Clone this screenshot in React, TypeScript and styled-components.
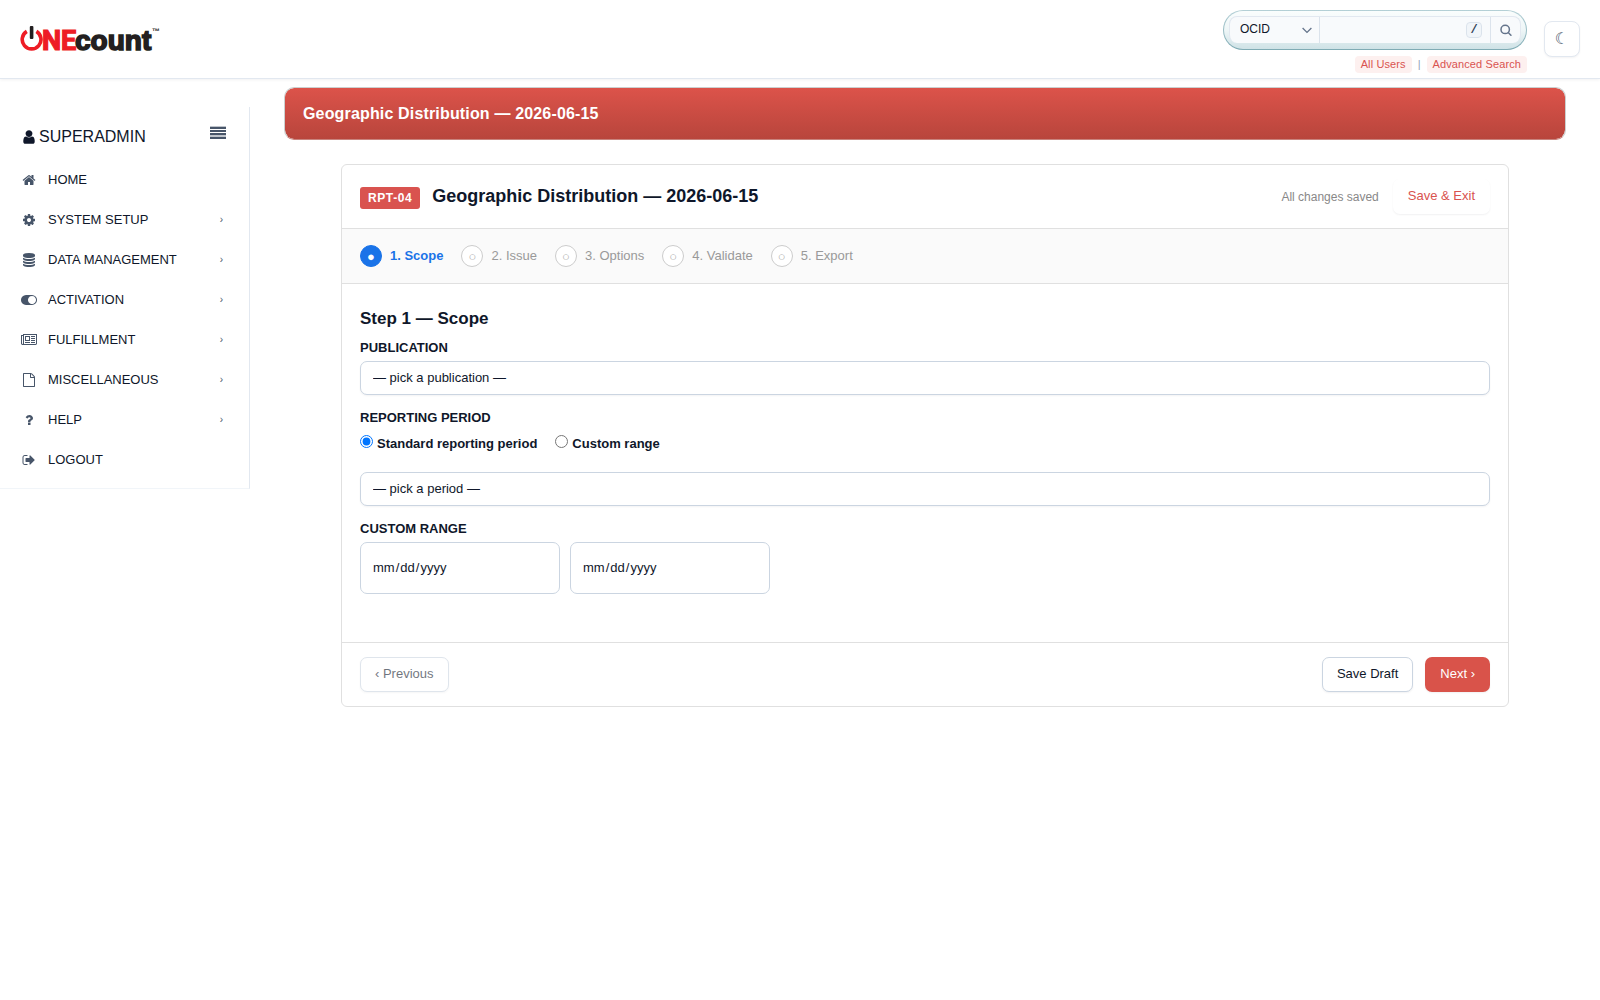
import React from "react";
import styled, { createGlobalStyle, css } from "styled-components";

const font = `"Liberation Sans", Arial, sans-serif`;

const GlobalStyle = createGlobalStyle`
  *, *::before, *::after { box-sizing: border-box; }
  body {
    margin: 0;
    background: #fff;
    color: #0f172a;
    font: 13px/16px ${font};
  }
  button, input, select { font: inherit; color: inherit; margin: 0; }
  h1, h2, h3, ul, fieldset { margin: 0; padding: 0; border: 0; }
`;

/* ---------- header ---------- */

const Header = styled.header`
  display: flex;
  align-items: center;
  justify-content: space-between;
  padding: 0 20px;
  border-bottom: 1px solid #e2e8f0;
  box-shadow: 0 1px 3px rgba(15, 23, 42, 0.06);
`;

const LogoLink = styled.a`
  display: block;
  line-height: 0;
`;

const HeaderTools = styled.div`
  display: flex;
  align-items: center;
  gap: 17px;
`;

const SearchColumn = styled.div`
  display: flex;
  flex-direction: column;
  align-items: flex-end;
  gap: 6px;
  padding: 10px 0 5px;
`;

const SearchPill = styled.form`
  display: flex;
  width: 304px;
  height: 40px;
  padding: 5px 5px 6px;
  border: 1px solid transparent;
  border-radius: 20px;
  background:
    linear-gradient(#fafdfd, #eef6f7 50%, #cfe2e6) padding-box,
    linear-gradient(#b4d0d6, #7fabb4) border-box;
`;

const SearchGroup = styled.div`
  display: flex;
  flex: 1;
  min-width: 0;
  border: 1px solid #e2e8f0;
  border-bottom: 0;
  border-radius: 8px;
  background: #f8fafc;
  overflow: hidden;
`;

const SearchTypeWrap = styled.div`
  position: relative;
  flex: 0 0 90px;
  border-right: 1px solid #dbe3ec;

  svg {
    position: absolute;
    right: 7px;
    top: 8px;
    pointer-events: none;
  }
`;

const SearchType = styled.select`
  appearance: none;
  width: 100%;
  height: 100%;
  padding: 0 20px 2px 10px;
  border: 0;
  background: transparent;
  font-size: 12px;
`;

const SearchInputWrap = styled.div`
  display: flex;
  flex: 1;
  min-width: 0;
  align-items: center;
  padding-right: 8px;
`;

const SearchInput = styled.input`
  flex: 1;
  min-width: 0;
  height: 100%;
  border: 0;
  padding: 0 8px;
  background: transparent;
`;

const Shortcut = styled.kbd`
  flex: 0 0 16px;
  height: 16px;
  border: 1px solid #dbe3ec;
  border-radius: 4px;
  background: #f1f5f9;
  color: #334155;
  font: 700 12px/14px "Liberation Mono", monospace;
  text-align: center;
`;

const SearchButton = styled.button`
  display: flex;
  flex: 0 0 30px;
  align-items: center;
  justify-content: center;
  padding: 0;
  border: 0;
  border-left: 1px solid #dbe3ec;
  background: transparent;
  color: #64748b;
`;

const QuickLinks = styled.nav`
  display: flex;
  align-items: center;
  gap: 6px;
  color: #94a3b8;
  font-size: 11px;
  line-height: 17px;
`;

const QuickLink = styled.a`
  padding: 0 6px;
  border-radius: 4px;
  background: #fdf0ef;
  color: #d9534f;
  letter-spacing: 0.01em;
  text-decoration: none;
`;

const ThemeButton = styled.button`
  width: 36px;
  height: 36px;
  padding: 0;
  border: 1px solid #e2e8f0;
  border-radius: 8px;
  background: #fff;
  box-shadow: 0 1px 2px rgba(15, 23, 42, 0.05);
  color: #475569;
  font: 16px/20px "DejaVu Sans", sans-serif;
`;

/* ---------- page ---------- */

const Page = styled.div`
  display: flex;
  align-items: flex-start;
`;

const Sidebar = styled.aside`
  flex: 0 0 250px;
  margin-top: 28px;
  padding: 15px 0 8px;
  border-right: 1px solid #e2e8f0;
  border-bottom: 1px solid #f1f5f9;
`;

const UserRow = styled.div`
  display: flex;
  align-items: flex-start;
  justify-content: space-between;
  height: 38px;
  padding: 4px 23px 0 21px;
`;

const UserName = styled.div`
  display: flex;
  align-items: center;
  gap: 2px;
  font-size: 16px;
  line-height: 22px;
`;

const MenuButton = styled.button`
  padding: 0;
  border: 0;
  background: transparent;
  color: #475569;
  line-height: 0;
`;

const NavList = styled.ul`
  list-style: none;
`;

const NavLink = styled.a`
  display: flex;
  align-items: center;
  height: 40px;
  padding: 0 26px 0 20px;
  color: #0f172a;
  text-decoration: none;
`;

const NavIcon = styled.span`
  display: flex;
  justify-content: center;
  width: 18px;
  margin-right: 10px;
  color: #475569;
`;

const NavText = styled.span`
  flex: 1;
`;

const NavArrow = styled.span`
  color: #475569;
  font-size: 10px;
`;

const Main = styled.main`
  flex: 1;
  min-width: 0;
  padding: 8px 34px 40px;
`;

const Banner = styled.h1`
  padding: 16px 18px;
  border: 1px solid #ccd0d0;
  border-radius: 10px;
  border-bottom-color: #c9837d;
  background: linear-gradient(#dc534a, #b8453c) padding-box;
  color: #fff;
  font-size: 16px;
  line-height: 19px;
  letter-spacing: 0.01em;
`;

const Card = styled.section`
  margin: 24px 57px 0;
  border: 1px solid #e0e0e0;
  border-radius: 6px;
  overflow: hidden;
`;

const CardHeader = styled.div`
  display: flex;
  align-items: center;
  justify-content: space-between;
  padding: 14px 18px;
  border-bottom: 1px solid #e0e0e0;
`;

const TitleGroup = styled.div`
  display: flex;
  align-items: baseline;
  gap: 12px;
`;

const Badge = styled.span`
  padding: 0 8px;
  border-radius: 3px;
  background: #d9534f;
  color: #fff;
  font-size: 12px;
  font-weight: 700;
  line-height: 22px;
  letter-spacing: 0.05em;
`;

const Title = styled.h2`
  font-size: 18px;
  line-height: 22px;
`;

const SaveGroup = styled.div`
  display: flex;
  align-items: center;
  gap: 14px;
`;

const SaveStatus = styled.span`
  color: #888;
  font-size: 12px;
`;

type Variant = "plain" | "outline" | "primary";

const Button = styled.button<{ $variant: Variant }>`
  height: 35px;
  padding: 0 14px 2px;
  border: 1px solid transparent;
  border-radius: 7px;
  background: #fff;
  box-shadow: 0 1px 2px rgba(15, 23, 42, 0.06);

  ${(p) => p.$variant === "plain" && css`color: #d9534f;`}
  ${(p) => p.$variant === "outline" && css`border-color: #cbd5e1;`}
  ${(p) => p.$variant === "primary" && css`background: #d9534a; color: #fff;`}

  &:disabled { opacity: 0.6; }
`;

const Stepper = styled.ol`
  display: flex;
  gap: 18px;
  margin: 0;
  padding: 16px 18px;
  border-bottom: 1px solid #e0e0e0;
  background: #fafafa;
  list-style: none;
`;

const Step = styled.li<{ $active: boolean }>`
  display: flex;
  align-items: center;
  gap: 8px;
  color: ${(p) => (p.$active ? "#1a73e8" : "#999")};
  font-weight: ${(p) => (p.$active ? 700 : 400)};
`;

const StepDot = styled.span<{ $active: boolean }>`
  width: 22px;
  height: 22px;
  border: 1px solid ${(p) => (p.$active ? "#1a73e8" : "#ccc")};
  border-radius: 50%;
  background: ${(p) => (p.$active ? "#1a73e8" : "#fff")};
  color: ${(p) => (p.$active ? "#fff" : "#aaa")};
  font-size: 13px;
  line-height: 21px;
  text-align: center;
`;

const CardBody = styled.div`
  display: flex;
  flex-direction: column;
  gap: 15px;
  padding: 24px 18px 48px;
`;

const StepTitle = styled.h3`
  margin-bottom: -5px;
  font-size: 17px;
  line-height: 22px;
`;

const Field = styled.div`
  display: flex;
  flex-direction: column;
  gap: 5px;
`;

const fieldLabel = css`
  display: block;
  padding: 0;
  font-weight: 700;
  line-height: 16px;
  text-transform: uppercase;
`;

const Label = styled.label`
  ${fieldLabel}
`;

const Legend = styled.legend`
  ${fieldLabel}
`;

const control = css`
  border: 1px solid #cbd5e1;
  border-radius: 7px;
  background: #fff;
  box-shadow: 0 1px 2px rgba(15, 23, 42, 0.05);
`;

const Select = styled.select`
  ${control}
  appearance: none;
  width: 100%;
  height: 34px;
  padding: 0 12px 1px;
`;

const RadioRow = styled.div`
  display: flex;
  gap: 18px;
  margin: 9px 0 19px;
`;

const RadioLabel = styled.label`
  display: flex;
  align-items: flex-start;
  gap: 4px;
  font-weight: 700;
  line-height: 18px;

  input {
    width: 13px;
    height: 13px;
  }
`;

const DateRow = styled.div`
  display: flex;
  gap: 10px;
  padding-top: 5px;
`;

const DateInput = styled.input`
  ${control}
  width: 200px;
  height: 52px;
  padding: 0 11px;
  box-shadow: none;

  &::-webkit-calendar-picker-indicator { display: none; }
  &::-webkit-datetime-edit-fields-wrapper { padding: 0; }
`;

const CardFooter = styled.div`
  display: flex;
  align-items: center;
  gap: 12px;
  padding: 14px 18px;
  border-top: 1px solid #e0e0e0;
`;

const Spacer = styled.span`
  flex: 1;
`;

/* ---------- icons ---------- */

const Glyph = ({ d, wide = false, size = 14 }: { d: string; wide?: boolean; size?: number }) => (
  <svg
    width={wide ? (size * 8) / 7 : size}
    height={size}
    viewBox={`0 0 ${wide ? 2048 : 1792} 1792`}
    fill="currentColor"
    aria-hidden="true"
  >
    <path d={d} />
  </svg>
);

const icons = {
  user: "M1536 1399q0 109-62.5 187t-150.5 78h-854q-88 0-150.5-78t-62.5-187q0-85 8.5-160.5t31.5-152 58.5-131 94-89 134.5-34.5q131 128 313 128t313-128q76 0 134.5 34.5t94 89 58.5 131 31.5 152 8.5 160.5zm-256-887q0 159-112.5 271.5t-271.5 112.5-271.5-112.5-112.5-271.5 112.5-271.5 271.5-112.5 271.5 112.5 112.5 271.5z",
  home: "M1472 992v480q0 26-19 45t-45 19h-384v-384h-256v384h-384q-26 0-45-19t-19-45v-480q0-1 .5-3t.5-3l575-474 575 474q1 2 1 6zm223-69l-62 74q-8 9-21 11h-3q-13 0-21-7l-692-577-692 577q-12 8-24 7-13-2-21-11l-62-74q-8-10-7-23.5t11-21.5l719-599q32-26 76-26t76 26l244 204v-195q0-14 9-23t23-9h192q14 0 23 9t9 23v408l219 182q10 8 11 21.5t-7 23.5z",
  cog: "M1152 896q0-106-75-181t-181-75-181 75-75 181 75 181 181 75 181-75 75-181zm512-109v222q0 12-8 23t-20 13l-185 28q-19 54-39 91 35 50 107 138 10 12 10 25t-9 23q-27 37-99 108t-94 71q-12 0-26-9l-138-108q-44 23-91 38-16 136-29 186-7 28-36 28h-222q-14 0-24.5-8.5t-11.5-21.5l-28-184q-49-16-90-37l-141 107q-10 9-25 9-14 0-25-11-126-114-165-168-7-10-7-23 0-12 8-23 15-21 51-66.5t54-70.5q-27-50-41-99l-183-27q-13-2-21-12.5t-8-23.5v-222q0-12 8-23t19-13l186-28q14-46 39-92-40-57-107-138-10-12-10-24 0-10 9-23 26-36 98.5-107.5t94.5-71.5q13 0 26 10l138 107q44-23 91-38 16-136 29-186 7-28 36-28h222q14 0 24.5 8.5t11.5 21.5l28 184q49 16 90 37l142-107q9-9 24-9 13 0 25 10 129 119 165 170 7 8 7 22 0 12-8 23-15 21-51 66.5t-54 70.5q26 50 41 98l183 28q13 2 21 12.5t8 23.5z",
  database: "M896 768q237 0 443-43t325-127v170q0 69-103 128t-280 93.5-385 34.5-385-34.5-280-93.5-103-128v-170q119 84 325 127t443 43zm0 768q237 0 443-43t325-127v170q0 69-103 128t-280 93.5-385 34.5-385-34.5-280-93.5-103-128v-170q119 84 325 127t443 43zm0-384q237 0 443-43t325-127v170q0 69-103 128t-280 93.5-385 34.5-385-34.5-280-93.5-103-128v-170q119 84 325 127t443 43zm0-1152q208 0 385 34.5t280 93.5 103 128v128q0 69-103 128t-280 93.5-385 34.5-385-34.5-280-93.5-103-128v-128q0-69 103-128t280-93.5 385-34.5z",
  toggle: "M0 896q0-130 51-248.5t136.5-204 204-136.5 248.5-51h768q130 0 248.5 51t204 136.5 136.5 204 51 248.5-51 248.5-136.5 204-204 136.5-248.5 51h-768q-130 0-248.5-51t-204-136.5-136.5-204-51-248.5zm1408 512q104 0 198.5-40.5t163.5-109.5 109.5-163.5 40.5-198.5-40.5-198.5-109.5-163.5-163.5-109.5-198.5-40.5-198.5 40.5-163.5 109.5-109.5 163.5-40.5 198.5 40.5 198.5 109.5 163.5 163.5 109.5 198.5 40.5z",
  newspaper: "M1024 512h-384v384h384v-384zm128 640v128h-640v-128h640zm0-768v640h-640v-640h640zm640 768v128h-512v-128h512zm0-256v128h-512v-128h512zm0-256v128h-512v-128h512zm0-256v128h-512v-128h512zm-1536 960v-960h-128v960q0 26 19 45t45 19 45-19 19-45zm1664 0v-1088h-1536v1088q0 33-11 64h1483q26 0 45-19t19-45zm128-1216v1216q0 80-56 136t-136 56h-1664q-80 0-136-56t-56-136v-1088h256v-128h1792z",
  file: "M1596 380q28 28 48 76t20 88v1152q0 40-28 68t-68 28h-1344q-40 0-68-28t-28-68v-1600q0-40 28-68t68-28h896q40 0 88 20t76 48zm-444-244v376h376q-10-29-22-41l-313-313q-12-12-41-22zm384 1528v-1024h-416q-40 0-68-28t-28-68v-416h-768v1536h1280z",
  question: "M1088 1256v240q0 16-12 28t-28 12h-240q-16 0-28-12t-12-28v-240q0-16 12-28t28-12h240q16 0 28 12t12 28zm316-600q0 54-15.5 101t-35 76.5-55 59.5-57.5 43.5-61 35.5q-41 23-68.5 65t-27.5 67q0 17-12 32.5t-28 15.5h-240q-15 0-25.5-18.5t-10.5-37.5v-45q0-83 65-156.5t143-108.5q59-27 84-56t25-76q0-42-46.5-74t-107.5-32q-65 0-108 29-35 25-107 115-13 16-31 16-12 0-25-8l-164-125q-13-10-15.5-25t5.5-28q160-266 464-266 80 0 161 31t146 83 106 127.5 41 158.5z",
  signOut: "M704 1440q0 4 1 20t.5 26.5-3 23.5-10 19.5-20.5 6.5h-320q-119 0-203.5-84.5t-84.5-203.5v-704q0-119 84.5-203.5t203.5-84.5h320q13 0 22.5 9.5t9.5 22.5q0 4 1 20t.5 26.5-3 23.5-10 19.5-20.5 6.5h-320q-66 0-113 47t-47 113v704q0 66 47 113t113 47h312l11.5 1 11.5 3 8 5.5 7 9 2 13.5zm928-544q0 26-19 45l-544 544q-19 19-45 19t-45-19-19-45v-288h-448q-26 0-45-19t-19-45v-384q0-26 19-45t45-19h448v-288q0-26 19-45t45-19 45 19l544 544q19 19 19 45z",
};

const Logo = () => (
  <svg width="144" height="42" viewBox="0 -6 144 42" role="img" aria-label="ONEcount">
    <path d="M6.8 7.4A9.4 9.4 0 1 0 16.4 7.4" fill="none" stroke="#ee1c25" strokeWidth="3.6" />
    <rect x="9.8" y="2" width="3.6" height="13" rx="1" fill="#231f20" />
    <text x="22" y="26" fill="#ee1c25" stroke="#ee1c25" strokeWidth="1.2" fontFamily="Roboto, sans-serif" fontWeight="700" fontSize="27">NE</text>
    <text x="55" y="26" fill="#231f20" stroke="#231f20" strokeWidth="1.6" fontFamily={font} fontWeight="700" fontSize="28">count</text>
    <text x="132" y="10" fill="#231f20" fontFamily={font} fontWeight="700" fontSize="8">™</text>
  </svg>
);

const nav = [
  { label: "HOME", icon: icons.home },
  { label: "SYSTEM SETUP", icon: icons.cog, sub: true },
  { label: "DATA MANAGEMENT", icon: icons.database, sub: true },
  { label: "ACTIVATION", icon: icons.toggle, wide: true, sub: true },
  { label: "FULFILLMENT", icon: icons.newspaper, wide: true, sub: true },
  { label: "MISCELLANEOUS", icon: icons.file, sub: true },
  { label: "HELP", icon: icons.question, sub: true },
  { label: "LOGOUT", icon: icons.signOut },
];

const steps = ["1. Scope", "2. Issue", "3. Options", "4. Validate", "5. Export"];

export default function App() {
  return (
    <>
      <GlobalStyle />
      <Header>
        <LogoLink href="#"><Logo /></LogoLink>
        <HeaderTools>
          <SearchColumn>
            <SearchPill>
              <SearchGroup>
                <SearchTypeWrap>
                  <SearchType aria-label="Search type">
                    <option>OCID</option>
                  </SearchType>
                  <svg width="10" height="10" viewBox="0 0 10 10" fill="none" stroke="#64748b" strokeWidth="1.3" aria-hidden="true">
                    <path d="M.6 3L5 7.4 9.4 3" />
                  </svg>
                </SearchTypeWrap>
                <SearchInputWrap>
                  <SearchInput type="text" aria-label="Search" />
                  <Shortcut>/</Shortcut>
                </SearchInputWrap>
                <SearchButton type="button" aria-label="Search">
                  <svg width="12" height="12" viewBox="0 0 12 12" fill="none" stroke="currentColor" strokeWidth="1.5" aria-hidden="true">
                    <circle cx="5.2" cy="5.4" r="4.2" />
                    <path d="M8.2 8.5l3.2 3.2" />
                  </svg>
                </SearchButton>
              </SearchGroup>
            </SearchPill>
            <QuickLinks>
              <QuickLink href="#">All Users</QuickLink>
              <span>|</span>
              <QuickLink href="#">Advanced Search</QuickLink>
            </QuickLinks>
          </SearchColumn>
          <ThemeButton type="button" aria-label="Toggle dark mode">☾</ThemeButton>
        </HeaderTools>
      </Header>

      <Page>
        <Sidebar>
          <UserRow>
            <UserName>
              <Glyph d={icons.user} size={16} />
              SUPERADMIN
            </UserName>
            <MenuButton type="button" aria-label="Collapse menu">
              <svg width="16" height="13" viewBox="0 0 16 13" fill="currentColor" aria-hidden="true">
                <path d="M0 1h16v2H0zM0 4h16v2H0zM0 7h16v2H0zM0 11h16v2H0z" />
                <path d="M0 0h16v1H0zM0 9h16v2H0z" opacity="0.35" />
              </svg>
            </MenuButton>
          </UserRow>
          <NavList>
            {nav.map((item) => (
              <li key={item.label}>
                <NavLink href="#">
                  <NavIcon><Glyph d={item.icon} wide={item.wide} /></NavIcon>
                  <NavText>{item.label}</NavText>
                  {item.sub && <NavArrow>›</NavArrow>}
                </NavLink>
              </li>
            ))}
          </NavList>
        </Sidebar>

        <Main>
          <Banner>Geographic Distribution — 2026-06-15</Banner>
          <Card>
            <CardHeader>
              <TitleGroup>
                <Badge>RPT-04</Badge>
                <Title>Geographic Distribution — 2026-06-15</Title>
              </TitleGroup>
              <SaveGroup>
                <SaveStatus>All changes saved</SaveStatus>
                <Button type="button" $variant="plain">Save &amp; Exit</Button>
              </SaveGroup>
            </CardHeader>
            <Stepper>
              {steps.map((label, i) => (
                <Step key={label} $active={i === 0}>
                  <StepDot $active={i === 0}>{i === 0 ? "●" : "○"}</StepDot>
                  {label}
                </Step>
              ))}
            </Stepper>
            <CardBody>
              <StepTitle>Step 1 — Scope</StepTitle>
              <Field>
                <Label htmlFor="publication">Publication</Label>
                <Select id="publication">
                  <option>— pick a publication —</option>
                </Select>
              </Field>
              <fieldset>
                <Legend>Reporting period</Legend>
                <RadioRow>
                  <RadioLabel>
                    <input type="radio" name="period" defaultChecked />
                    Standard reporting period
                  </RadioLabel>
                  <RadioLabel>
                    <input type="radio" name="period" />
                    Custom range
                  </RadioLabel>
                </RadioRow>
                <Select aria-label="Period">
                  <option>— pick a period —</option>
                </Select>
              </fieldset>
              <fieldset>
                <Legend>Custom range</Legend>
                <DateRow>
                  <DateInput type="date" aria-label="Start date" />
                  <DateInput type="date" aria-label="End date" />
                </DateRow>
              </fieldset>
            </CardBody>
            <CardFooter>
              <Button type="button" $variant="outline" disabled>‹ Previous</Button>
              <Spacer />
              <Button type="button" $variant="outline">Save Draft</Button>
              <Button type="button" $variant="primary">Next ›</Button>
            </CardFooter>
          </Card>
        </Main>
      </Page>
    </>
  );
}
